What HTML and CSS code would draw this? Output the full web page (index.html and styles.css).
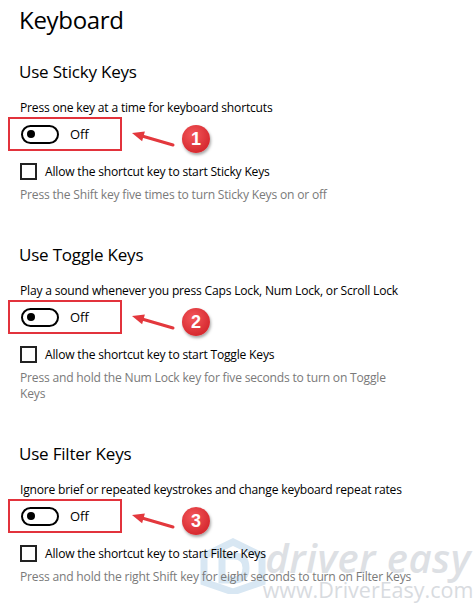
FILE: index.html
```html
<!DOCTYPE html>
<html>
  <head>
    <title>Keyboard</title>
    <link rel="stylesheet" href="styles.css">
  </head>
  <body>
    <main class="page">
      <!-- watermark sits behind the last section -->
      <div class="watermark">
        <svg class="logo" viewBox="0 0 70 56" width="70" height="56">
          <polygon points="35,4 64,18 64,44 35,54 6,44 6,18" />
          <path d="M24 18 L36 18 Q48 18 48 30 Q48 42 36 42 L24 42 Z" />
        </svg>
        <div class="mark-text">
          <span class="brand">driver easy</span>
          <span class="site">www.DriverEasy.com</span>
        </div>
      </div>

      <h1 class="title">Keyboard</h1>

      <section class="group">
        <h2>Use Sticky Keys</h2>
        <p class="desc">Press one key at a time for keyboard shortcuts</p>
        <div class="toggle-line">
          <div class="callout">
            <span class="switch"><span class="knob"></span></span>
            <span class="state">Off</span>
          </div>
          <svg class="arrow" viewBox="0 0 52 34" width="52" height="34">
            <line x1="47" y1="28" x2="16" y2="19" />
            <polygon points="6,16 18.9,14.4 16.1,24.2" />
          </svg>
          <span class="badge">1</span>
        </div>
        <label class="check"><span class="box"></span>Allow the shortcut key to start Sticky Keys</label>
        <p class="hint">Press the Shift key five times to turn Sticky Keys on or off</p>
      </section>

      <section class="group">
        <h2>Use Toggle Keys</h2>
        <p class="desc">Play a sound whenever you press Caps Lock, Num Lock, or Scroll Lock</p>
        <div class="toggle-line">
          <div class="callout">
            <span class="switch"><span class="knob"></span></span>
            <span class="state">Off</span>
          </div>
          <svg class="arrow" viewBox="0 0 52 34" width="52" height="34">
            <line x1="47" y1="28" x2="16" y2="19" />
            <polygon points="6,16 18.9,14.4 16.1,24.2" />
          </svg>
          <span class="badge">2</span>
        </div>
        <label class="check"><span class="box"></span>Allow the shortcut key to start Toggle Keys</label>
        <p class="hint">Press and hold the Num Lock key for five seconds to turn on Toggle Keys</p>
      </section>

      <section class="group">
        <h2>Use Filter Keys</h2>
        <p class="desc">Ignore brief or repeated keystrokes and change keyboard repeat rates</p>
        <div class="toggle-line">
          <div class="callout">
            <span class="switch"><span class="knob"></span></span>
            <span class="state">Off</span>
          </div>
          <svg class="arrow" viewBox="0 0 52 34" width="52" height="34">
            <line x1="47" y1="28" x2="16" y2="19" />
            <polygon points="6,16 18.9,14.4 16.1,24.2" />
          </svg>
          <span class="badge">3</span>
        </div>
        <label class="check"><span class="box"></span>Allow the shortcut key to start Filter Keys</label>
        <p class="hint">Press and hold the right Shift key for eight seconds to turn on Filter Keys</p>
      </section>
    </main>
  </body>
</html>
```

FILE: styles.css
```css
body {
  margin: 0;
  background: #fff;
  font-family: "Open Sans", "Noto Sans", sans-serif;
  color: #000;
}
.page {
  position: relative;
  width: 474px;
  height: 610px;
  padding: 4px 0 0 20px;
  box-sizing: border-box;
  overflow: hidden;
}
.title {
  position: relative;
  margin: 0 0 24px -1px;
  font-size: 24px;
  line-height: 32px;
  font-weight: 400;
  letter-spacing: -0.3px;
}
.group {
  position: relative;
  margin-bottom: 40px;
}
.group h2 {
  margin: 0 0 15px -1px;
  font-size: 17px;
  line-height: 24px;
  font-weight: 400;
  letter-spacing: -0.2px;
}
.desc {
  margin: 0;
  font-size: 12.1px;
  line-height: 18px;
  letter-spacing: -0.2px;
}
.toggle-line {
  display: flex;
  align-items: flex-start;
  height: 34px;
}
.callout {
  display: flex;
  align-items: center;
  width: 114px;
  height: 34px;
  margin-left: -12px;
  padding-left: 11px;
  border: 2px solid #e2333c;
  box-sizing: border-box;
}
.switch {
  position: relative;
  display: inline-block;
  width: 38px;
  height: 19px;
  border: 2px solid #000;
  border-radius: 10px;
  box-sizing: border-box;
}
.knob {
  position: absolute;
  left: 4px;
  top: 3.5px;
  width: 8px;
  height: 8px;
  border-radius: 50%;
  background: #000;
}
.state {
  margin-left: 11px;
  font-size: 13px;
}
.arrow {
  margin-left: 4px;
}
.arrow line {
  stroke: #e3383d;
  stroke-width: 3;
  stroke-linecap: round;
}
.arrow polygon {
  fill: #e3383d;
}
.badge {
  display: flex;
  align-items: center;
  justify-content: center;
  width: 28px;
  height: 28px;
  margin: 8px 0 0 4px;
  border-radius: 50%;
  background: radial-gradient(circle at 40% 35%, #f3575a, #d72b31 70%);
  box-shadow: 1px 2px 3px rgba(0, 0, 0, 0.35);
  color: #fff;
  font-family: "Liberation Sans", Arial, sans-serif;
  font-size: 18px;
  font-weight: 700;
}
.check {
  display: flex;
  align-items: center;
  height: 20px;
  margin-top: 10px;
  font-size: 12.1px;
  letter-spacing: -0.2px;
}
.box {
  width: 17px;
  height: 17px;
  margin-right: 8px;
  border: 2px solid #222;
  box-sizing: border-box;
}
.hint {
  margin: 6px 0 0;
  width: 393px;
  font-size: 12.1px;
  line-height: 16px;
  color: #7a7a7a;
  letter-spacing: -0.2px;
}
.watermark {
  position: absolute;
  left: 198px;
  top: 538px;
  display: flex;
  align-items: flex-start;
  white-space: nowrap;
}
.logo polygon,
.logo path {
  fill: none;
  stroke: #d8e7f3;
  stroke-width: 7;
}
.mark-text {
  display: flex;
  flex-direction: column;
  align-items: center;
  width: 200px;
}
.brand {
  font-size: 40px;
  line-height: 40px;
  font-style: italic;
  font-weight: 600;
  color: #dde0e4;
  letter-spacing: 0.5px;
}
.site {
  margin-top: 1px;
  font-size: 21.5px;
  line-height: 22px;
  color: #d8dbdf;
}
```
